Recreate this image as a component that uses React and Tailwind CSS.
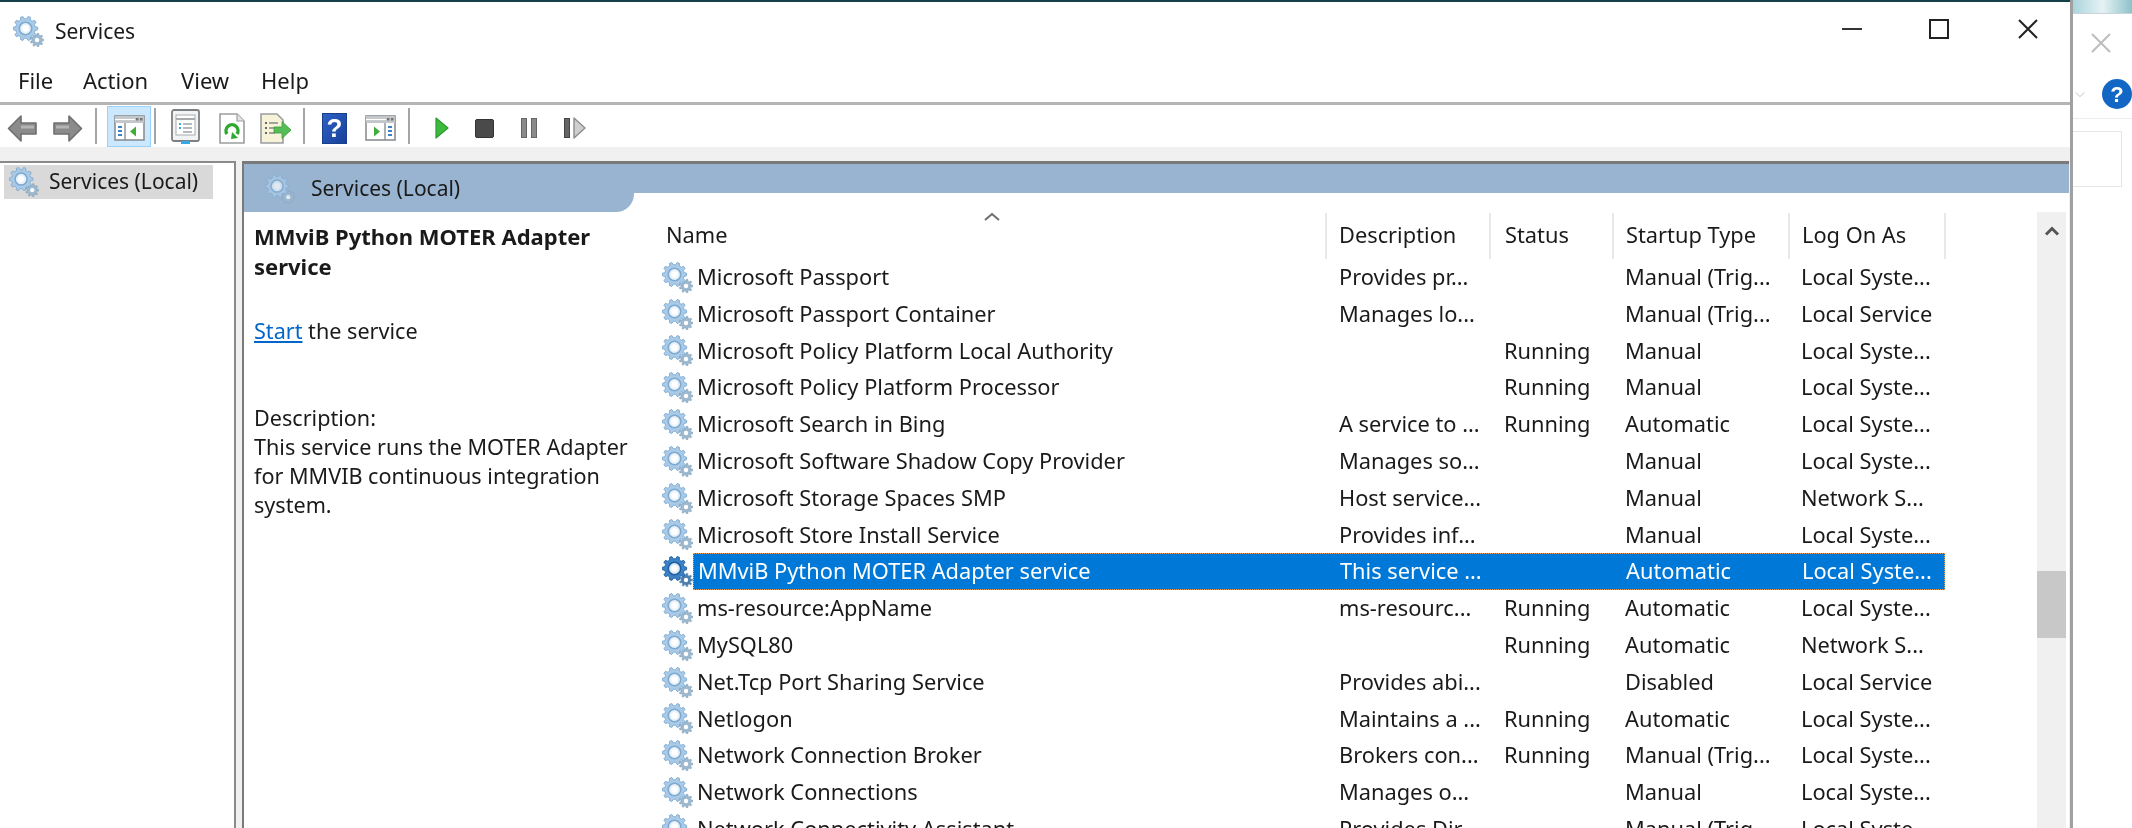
import React from "react";

const FONT = "font-['Noto_Sans','Open_Sans',sans-serif]";

const rows = [
  ["Microsoft Passport", "Provides pr...", "", "Manual (Trig...", "Local Syste..."],
  ["Microsoft Passport Container", "Manages lo...", "", "Manual (Trig...", "Local Service"],
  ["Microsoft Policy Platform Local Authority", "", "Running", "Manual", "Local Syste..."],
  ["Microsoft Policy Platform Processor", "", "Running", "Manual", "Local Syste..."],
  ["Microsoft Search in Bing", "A service to ...", "Running", "Automatic", "Local Syste..."],
  ["Microsoft Software Shadow Copy Provider", "Manages so...", "", "Manual", "Local Syste..."],
  ["Microsoft Storage Spaces SMP", "Host service...", "", "Manual", "Network S..."],
  ["Microsoft Store Install Service", "Provides inf...", "", "Manual", "Local Syste..."],
  ["MMviB Python MOTER Adapter service", "This service ...", "", "Automatic", "Local Syste...", true],
  ["ms-resource:AppName", "ms-resourc...", "Running", "Automatic", "Local Syste..."],
  ["MySQL80", "", "Running", "Automatic", "Network S..."],
  ["Net.Tcp Port Sharing Service", "Provides abi...", "", "Disabled", "Local Service"],
  ["Netlogon", "Maintains a ...", "Running", "Automatic", "Local Syste..."],
  ["Network Connection Broker", "Brokers con...", "Running", "Manual (Trig...", "Local Syste..."],
  ["Network Connections", "Manages o...", "", "Manual", "Local Syste..."],
  ["Network Connectivity Assistant", "Provides Dir...", "", "Manual (Trig...", "Local Syste..."],
];

function gearPoints(cx, cy, outer, root, teeth) {
  const pts = [];
  const step = (Math.PI * 2) / teeth;
  for (let i = 0; i < teeth; i++) {
    const a = i * step;
    const list = [
      [a - step * 0.32, root],
      [a - step * 0.16, outer],
      [a + step * 0.16, outer],
      [a + step * 0.32, root],
    ];
    list.forEach(([t, r]) => {
      pts.push(`${(cx + Math.cos(t) * r).toFixed(2)},${(cy + Math.sin(t) * r).toFixed(2)}`);
    });
  }
  return pts.join(" ");
}

function Gear({ className, selected }) {
  const body = selected ? "#3d82c4" : "#a9cbe8";
  const edge = selected ? "#1f5fa3" : "#7ea9d0";
  const small = selected ? "#4a7fae" : "#9db9cf";
  return (
    <svg viewBox="0 0 31 31" className={className}>
      <polygon points={gearPoints(24, 24, 6.8, 5, 9)} fill={small} stroke="#7f9db4" strokeWidth="0.6" />
      <circle cx="24" cy="24" r="2.2" fill="#fff" />
      <polygon points={gearPoints(12.5, 12.5, 12.2, 9.8, 10)} fill={body} stroke={edge} strokeWidth="0.9" />
      <circle cx="12.5" cy="12.5" r="6.2" fill={selected ? "#dbeaf7" : "#e8f2fa"} stroke={edge} strokeWidth="1.6" />
      <circle cx="12.5" cy="12.5" r="3.2" fill="#fff" />
    </svg>
  );
}

function Separator({ className }) {
  return <div className={`h-[36px] w-[2px] bg-[#a5a5a5] ${className}`} />;
}

function Arrow({ flip, className }) {
  return (
    <svg viewBox="0 0 31 29" className={`h-[29px] w-[31px] ${flip ? "-scale-x-100" : ""} ${className}`}>
      <path d="M1.5 14.5 14 2v7h15v11H14v7z" fill="#8b8b8b" stroke="#6f6f6f" strokeWidth="1.6" strokeLinejoin="round" />
      <path d="M14 11.5h13v3H14z" fill="#b5b5b5" />
    </svg>
  );
}

function PaneIcon({ right, className }) {
  return (
    <svg viewBox="0 0 31 26" className={`h-[26px] w-[31px] ${className}`}>
      <rect x="1" y="1" width="29" height="24" fill="#fff" stroke="#8b8f93" strokeWidth="1.6" />
      <rect x="1" y="1" width="29" height="7" fill="#c4c7ca" />
      <path d="M1 4.5h20" stroke="#fff" strokeWidth="1.2" />
      <rect x="22" y="3" width="2.5" height="2.5" fill="#777" />
      <rect x="26" y="3" width="2.5" height="2.5" fill="#777" />
      {right ? (
        <>
          <path d="M20 8v17" stroke="#8b8f93" strokeWidth="1.4" />
          <path d="M9 11.5v10l6-5z" fill="#3fae3a" />
          <path d="M23 12h4M23 16h4M23 20h4" stroke="#3f82c4" strokeWidth="2" />
        </>
      ) : (
        <>
          <path d="M11 8v17" stroke="#8b8f93" strokeWidth="1.4" />
          <path d="M4 12h4M4 16h4M4 20h4" stroke="#3f82c4" strokeWidth="2" />
          <path d="M22 11.5v10l-6-5z" fill="#3fae3a" />
        </>
      )}
    </svg>
  );
}

function PropsIcon({ className }) {
  return (
    <svg viewBox="0 0 29 36" className={`h-[36px] w-[29px] ${className}`}>
      <rect x="1" y="1" width="27" height="31" rx="2" fill="#f2f3f4" stroke="#7d8083" strokeWidth="1.8" />
      <rect x="5" y="6" width="19" height="20" fill="#fff" stroke="#a8abae" strokeWidth="1" />
      <path d="M5 10h19" stroke="#a8abae" strokeWidth="2" />
      <path d="M8 15h2M8 19h2" stroke="#39a9e6" strokeWidth="2" />
      <path d="M12 15h9M12 19h9M12 23h9" stroke="#a0a3a6" strokeWidth="1.4" />
      <rect x="10" y="32" width="9" height="3" fill="#39a9e6" />
    </svg>
  );
}

function RefreshIcon({ className }) {
  return (
    <svg viewBox="0 0 26 31" className={`h-[31px] w-[26px] ${className}`}>
      <path d="M1 1h17l7 7v22H1z" fill="#fff" stroke="#9a9da0" strokeWidth="1.6" />
      <path d="M18 1v7h7" fill="#e4e5e6" stroke="#9a9da0" strokeWidth="1.2" />
      <path d="M8 21a6 6 0 1 1 10 0" fill="none" stroke="#2fa82f" strokeWidth="3.4" />
      <path d="M13 19l6 6-7 1z" fill="#2fa82f" />
    </svg>
  );
}

function ExportIcon({ className }) {
  return (
    <svg viewBox="0 0 31 31" className={`h-[31px] w-[31px] ${className}`}>
      <path d="M1 1h16l6 6v23H1z" fill="#f7f3d8" stroke="#9a9da0" strokeWidth="1.6" />
      <path d="M5 10h2M5 15h2M5 20h2" stroke="#666" strokeWidth="2" />
      <path d="M9 10h9M9 15h7M9 20h6" stroke="#888" strokeWidth="1.6" />
      <path d="M14 14h8V8.5L31 17l-9 8.5V20h-8z" fill="#55bd55" stroke="#3d9c3d" strokeWidth="0.8" />
    </svg>
  );
}

function HelpIcon({ className }) {
  return (
    <div className={`flex h-[31px] w-[25px] items-center justify-center border border-[#173f8c] bg-gradient-to-br from-[#2f62c4] to-[#16409a] font-['Liberation_Sans',sans-serif] text-[26px] leading-none font-bold text-white ${className}`}>
      ?
    </div>
  );
}

function Toolbar() {
  return (
    <div className="flex h-[42px] items-center pt-[4px] pl-[7px]">
      <Arrow />
      <Arrow flip className="ml-[14px]" />
      <Separator className="ml-[12px] -mt-[4px]" />
      <div className="-mt-[3px] ml-[10px] flex h-[41px] w-[44px] items-center justify-center border border-[#99d1ff] bg-[#cce8ff] pt-[3px]">
        <PaneIcon />
      </div>
      <Separator className="ml-[3px] -mt-[4px]" />
      <PropsIcon className="ml-[15px] -mt-[3px]" />
      <RefreshIcon className="ml-[19px]" />
      <ExportIcon className="ml-[15px]" />
      <Separator className="ml-[12px] -mt-[4px]" />
      <HelpIcon className="ml-[17px]" />
      <PaneIcon right className="ml-[18px]" />
      <Separator className="ml-[12px] -mt-[4px]" />
      <svg viewBox="0 0 14 22" className="ml-[25px] h-[22px] w-[14px]">
        <path d="M1 1l12 10L1 21z" fill="#3db93d" stroke="#2c9a2c" strokeWidth="1.2" strokeLinejoin="round" />
      </svg>
      <div className="ml-[26px] h-[19px] w-[19px] rounded-[2px] border border-[#333] bg-[#4a4a4a]" />
      <div className="ml-[27px] flex gap-[4px]">
        <div className="h-[20px] w-[6px] border border-[#666] bg-[#8a8a8a]" />
        <div className="h-[20px] w-[6px] border border-[#666] bg-[#8a8a8a]" />
      </div>
      <div className="ml-[27px] flex items-center gap-[3px]">
        <div className="h-[20px] w-[6px] border border-[#444] bg-[#666]" />
        <svg viewBox="0 0 13 22" className="h-[22px] w-[13px]">
          <path d="M1 1l11 10L1 21z" fill="#cfcfcf" stroke="#8c8c8c" strokeWidth="1.4" strokeLinejoin="round" />
        </svg>
      </div>
    </div>
  );
}

function DetailPane() {
  return (
    <div className="w-[396px] shrink-0 pt-[9px] pl-[10px] text-[21.6px] leading-[29px] text-[#1a1a1a]">
      <div className="text-[22px] leading-[30px] font-bold">MMviB Python MOTER Adapter service</div>
      <div className="mt-[35px]">
        <span className="text-[#0066cc] underline">Start</span> the service
      </div>
      <div className="mt-[58px]">Description:</div>
      <div>This service runs the MOTER Adapter for MMVIB continuous integration system.</div>
    </div>
  );
}

function ServiceRow({ row }) {
  const [name, desc, status, startup, logon, selected] = row;
  return (
    <div className="flex h-[36.8px] items-center pl-[22px]">
      <Gear className="h-[31px] w-[31px] shrink-0" selected={selected} />
      <div
        className={`grid h-full w-[1252px] grid-cols-[633px_164px_123px_175px_157px] items-center text-[21.8px] whitespace-nowrap ${
          selected ? "border border-dotted border-[#e8a060] bg-[#0078d7] text-white" : "text-[#1a1a1a]"
        }`}
      >
        <div className="pl-[4px]">{name}</div>
        <div className="pl-[13px]">{desc}</div>
        <div className="pl-[14px]">{status}</div>
        <div className="pl-[12px]">{startup}</div>
        <div className="pl-[13px]">{logon}</div>
      </div>
    </div>
  );
}

function ListPane() {
  const heads = [
    ["Name", "w-[687px] pl-[26px]"],
    ["Description", "w-[164px] pl-[12px]"],
    ["Status", "w-[123px] pl-[14px]"],
    ["Startup Type", "w-[176px] pl-[12px]"],
    ["Log On As", "w-[156px] pl-[12px]"],
  ];
  return (
    <div className="flex min-w-0 flex-1 pt-[19px]">
      <div className="relative w-[1397px] shrink-0 overflow-hidden">
        <div className="flex h-[47px] items-center text-[21.8px] text-[#1a1a1a]">
          {heads.map(([label, cls]) => (
            <div key={label} className={`flex h-[46px] items-center border-r-2 border-[#e8e8e8] ${cls}`}>
              {label}
            </div>
          ))}
        </div>
        <svg viewBox="0 0 16 9" className="absolute top-0 left-[344px] h-[9px] w-[16px]">
          <path d="M1 8l7-6 7 6" fill="none" stroke="#6d6d6d" strokeWidth="2" />
        </svg>
        {rows.map((row) => (
          <ServiceRow key={row[0]} row={row} />
        ))}
      </div>
      <div className="flex w-[29px] shrink-0 flex-col bg-[#f0f0f0]">
        <svg viewBox="0 0 16 10" className="mx-auto mt-[14px] h-[10px] w-[16px]">
          <path d="M2 8.5l6-6 6 6" fill="none" stroke="#555" strokeWidth="3" />
        </svg>
        <div className="mt-[335px] h-[67px] w-[29px] bg-[#c8c8c8]" />
      </div>
    </div>
  );
}

function WindowButtons() {
  return (
    <div className="-mt-[6px] flex items-center pr-[32px]">
      <div className="h-[2px] w-[20px] bg-[#333]" />
      <div className="ml-[67px] h-[20px] w-[20px] border-2 border-[#222]" />
      <svg viewBox="0 0 20 20" className="ml-[69px] h-[20px] w-[20px]">
        <path d="M1 1l18 18M19 1L1 19" stroke="#222" strokeWidth="2" />
      </svg>
    </div>
  );
}

function SideWindow() {
  return (
    <div className="flex min-w-0 flex-1 flex-col">
      <div className="h-[14px] border-b border-[#c9d2d6] bg-gradient-to-r from-[#a9d5dc] via-[#e6f2f4] to-[#8cc2cb]" />
      <svg viewBox="0 0 20 20" className="mt-[19px] ml-[18px] h-[20px] w-[20px]">
        <path d="M1 1l18 18M19 1L1 19" stroke="#bdbdbd" strokeWidth="2" />
      </svg>
      <div className="mt-[26px] flex items-center">
        <svg viewBox="0 0 16 9" className="ml-[2px] h-[9px] w-[16px]">
          <path d="M1 1l7 7 7-7" fill="none" stroke="#c4c4c4" strokeWidth="1.6" />
        </svg>
        <div className="ml-[17px] flex h-[30px] w-[30px] shrink-0 items-center justify-center rounded-full bg-[#1266c4] font-['Liberation_Sans',sans-serif] text-[22px] font-bold text-white">
          ?
        </div>
      </div>
      <div className="mt-[9px] border-t border-[#ececec] pt-[12px]">
        <div className="h-[56px] w-[49px] border border-l-0 border-[#e6e6e6]" />
      </div>
    </div>
  );
}

export default function App() {
  return (
    <div className={`flex h-[828px] w-[2132px] overflow-hidden bg-white blur-[0.5px] ${FONT}`}>
      <div className="flex w-[2073px] shrink-0 flex-col border-r-[3px] border-[#a0a0a0]">
        <div className="h-[2px] bg-[#15404a]" />
        <div className="flex h-[59px] items-center justify-between pl-[13px]">
          <div className="flex items-center gap-[11px] text-[21px] text-[#1a1a1a]">
            <Gear className="h-[31px] w-[31px]" />
            Services
          </div>
          <WindowButtons />
        </div>
        <div className="flex h-[44px] items-center border-b-[3px] border-[#b4b4b4] pb-[2px] pl-[18px] text-[22px] text-[#1a1a1a]">
          <span className="w-[65px]">File</span>
          <span className="w-[98px]">Action</span>
          <span className="w-[80px]">View</span>
          <span>Help</span>
        </div>
        <Toolbar />
        <div className="flex min-h-0 flex-1 gap-[6px] bg-[#f0f0f0] pt-[14px] pr-[1px]">
          <div className="w-[236px] shrink-0 border-t-2 border-r-2 border-[#8a8a8a] bg-white pt-[2px] pl-[4px] text-[#1a1a1a]">
            <div className="flex h-[34px] w-[209px] items-center gap-[10px] bg-[#d9d9d9] pl-[5px] text-[21px]">
              <Gear className="h-[30px] w-[30px]" />
              Services (Local)
            </div>
          </div>
          <div className="flex min-w-0 flex-1 flex-col border-t-[3px] border-l-2 border-[#7a7a7a] bg-white">
            <div className="flex h-[29px] bg-[#99b4d1]" />
            <div className="flex min-h-0 flex-1">
              <div className="relative flex min-h-0">
                <div className="absolute -top-[29px] left-0 flex h-[48px] w-[390px] items-center gap-[16px] rounded-br-[18px] bg-[#99b4d1] pt-[2px] pl-[21px] text-[21px] text-[#1a1a1a]">
                  <Gear className="h-[30px] w-[30px] opacity-70" />
                  Services (Local)
                </div>
                <div className="pt-[19px]">
                  <DetailPane />
                </div>
              </div>
              <ListPane />
            </div>
          </div>
        </div>
      </div>
      <SideWindow />
    </div>
  );
}
